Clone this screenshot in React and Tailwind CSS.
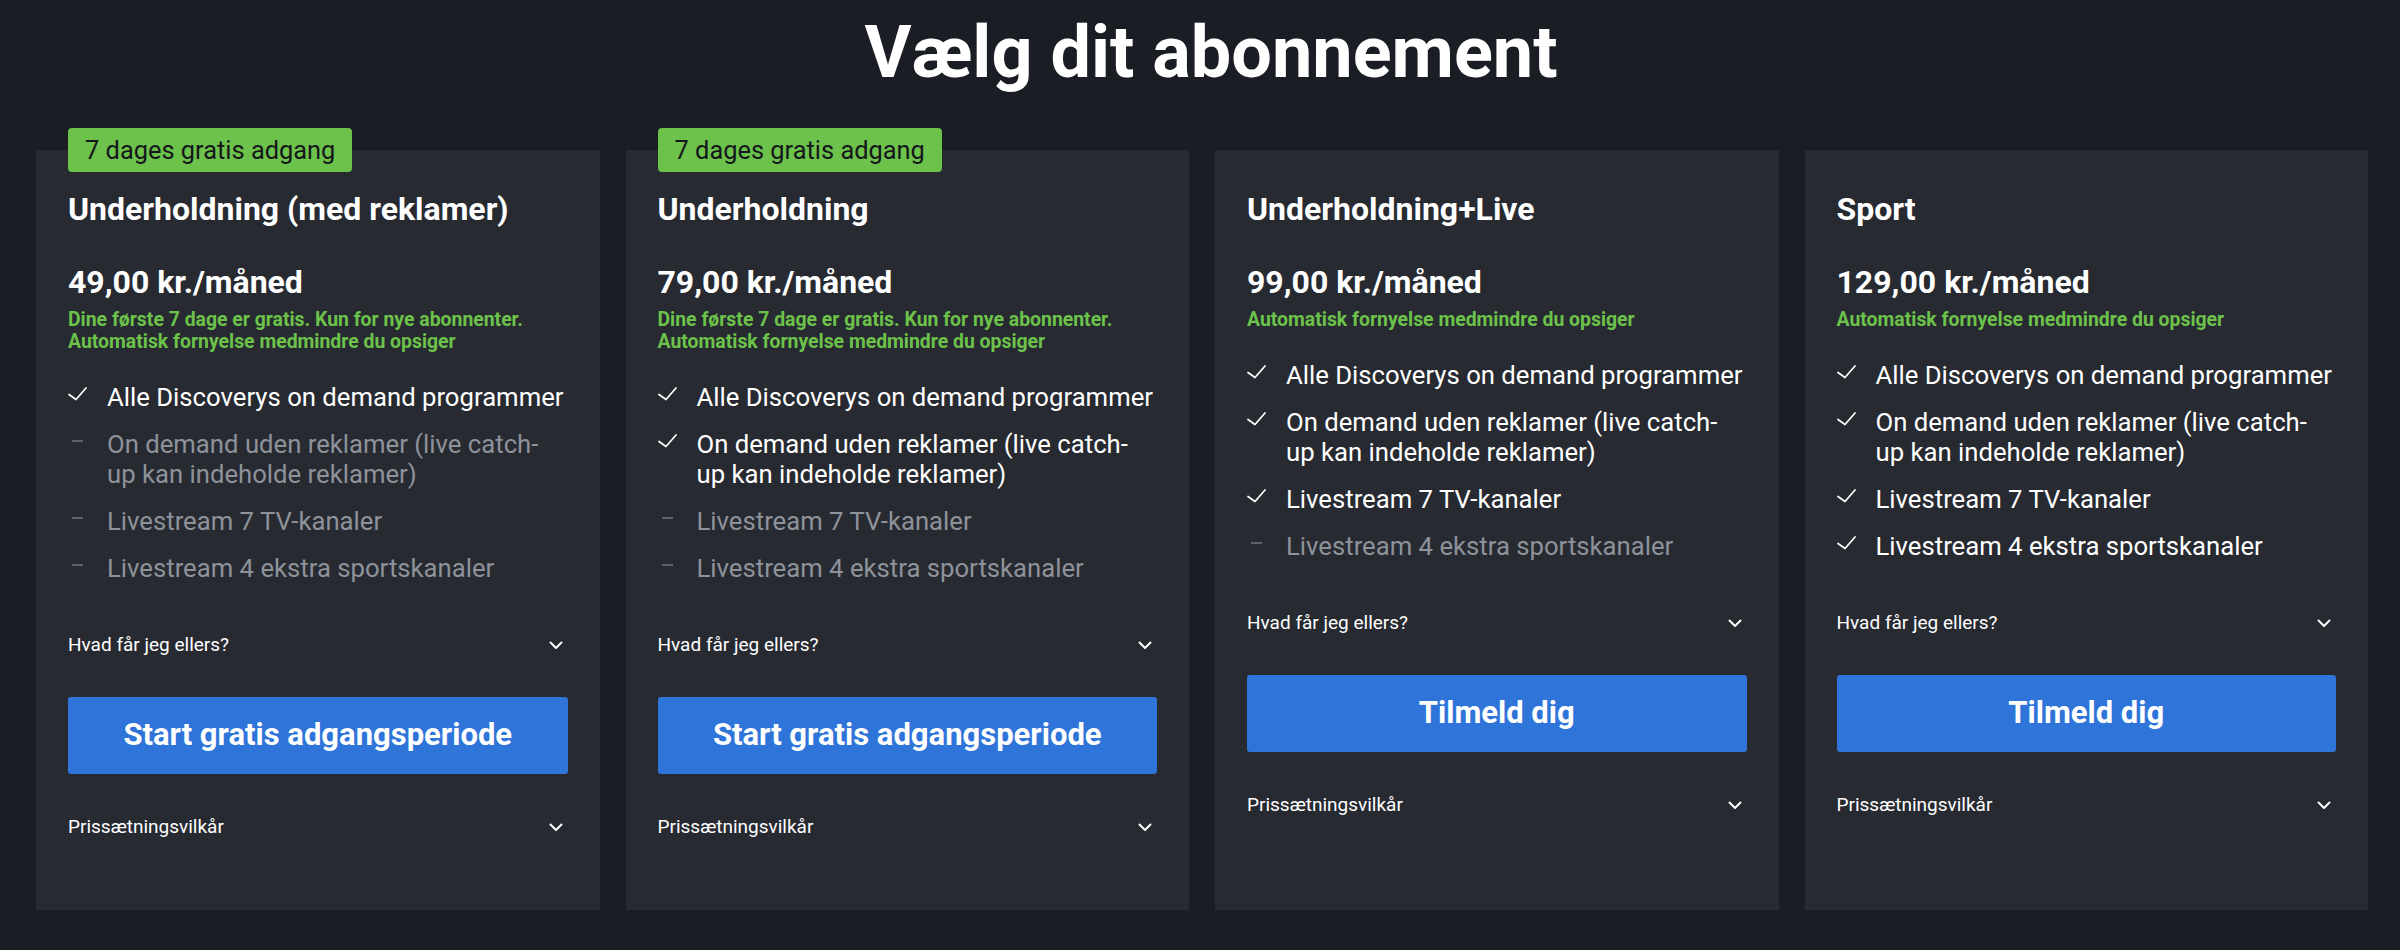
import React from 'react';

const plans = [
  {
    name: 'Underholdning (med reklamer)',
    price: '49,00 kr./måned',
    trial: true,
    note: ['Dine første 7 dage er gratis. Kun for nye abonnenter.', 'Automatisk fornyelse medmindre du opsiger'],
    features: [true, false, false, false],
    cta: 'Start gratis adgangsperiode',
  },
  {
    name: 'Underholdning',
    price: '79,00 kr./måned',
    trial: true,
    note: ['Dine første 7 dage er gratis. Kun for nye abonnenter.', 'Automatisk fornyelse medmindre du opsiger'],
    features: [true, true, false, false],
    cta: 'Start gratis adgangsperiode',
  },
  {
    name: 'Underholdning+Live',
    price: '99,00 kr./måned',
    trial: false,
    note: ['Automatisk fornyelse medmindre du opsiger'],
    features: [true, true, true, false],
    cta: 'Tilmeld dig',
  },
  {
    name: 'Sport',
    price: '129,00 kr./måned',
    trial: false,
    note: ['Automatisk fornyelse medmindre du opsiger'],
    features: [true, true, true, true],
    cta: 'Tilmeld dig',
  },
];

// lines kept as in the design (breaks after "catch-")
const featureLabels = [
  ['Alle Discoverys on demand programmer'],
  ['On demand uden reklamer (live catch-', 'up kan indeholde reklamer)'],
  ['Livestream 7 TV-kanaler'],
  ['Livestream 4 ekstra sportskanaler'],
];

const Check = () => (
  <svg width="19" height="14" viewBox="0 0 19 14" fill="none" className="mt-[5px]">
    <path d="M1 7.5L8 12.5L18 1" stroke="#ffffff" strokeWidth="1.7" strokeLinecap="round" strokeLinejoin="round" />
  </svg>
);

const Dash = () => <div className="mt-[11px] ml-[4px] h-[2px] w-[11px] bg-[#5d6169]" />;

const Chevron = () => (
  <svg width="14" height="9" viewBox="0 0 14 9" fill="none" className="mr-[5px]">
    <path d="M1.5 1.5L7 7L12.5 1.5" stroke="#ffffff" strokeWidth="2" strokeLinecap="round" strokeLinejoin="round" />
  </svg>
);

const Toggle = ({ label }) => (
  <div className="flex items-center justify-between h-[24px] text-[19px] leading-[24px] text-white">
    <span>{label}</span>
    <Chevron />
  </div>
);

const PlanCard = ({ plan }) => (
  <div className="relative flex flex-col bg-[#272a31] px-8 pt-[41px] pb-[71px]">
    {plan.trial && (
      <div className="absolute top-[-22px] left-8 h-[44px] px-[17px] flex items-center rounded-[4px] bg-[#6cc24a] text-[25.4px] text-[#15171c]">
        7 dages gratis adgang
      </div>
    )}
    <h3 className="text-[32px] leading-[36px] font-bold text-white">{plan.name}</h3>
    <div className="mt-[37px] text-[32px] leading-[36px] font-bold text-white">{plan.price}</div>
    <div className="mt-[9px] text-[19.4px] leading-[22px] font-bold text-[#6cc24a]">
      {plan.note.map((n) => (
        <div key={n}>{n}</div>
      ))}
    </div>
    <ul className="mt-[29px] flex flex-col gap-[17px]">
      {featureLabels.map((lines, i) => (
        <li key={lines[0]} className="flex">
          <div className="w-[39px] shrink-0">{plan.features[i] ? <Check /> : <Dash />}</div>
          <div
            className={`whitespace-nowrap text-[25.7px] leading-[30px] ${plan.features[i] ? 'text-white' : 'text-[#8e929a]'}`}
          >
            {lines.map((l) => (
              <div key={l}>{l}</div>
            ))}
          </div>
        </li>
      ))}
    </ul>
    <div className="mt-[50px]">
      <Toggle label="Hvad får jeg ellers?" />
    </div>
    <button className="mt-[40px] h-[77px] w-full rounded-[3px] bg-[#2f74d9] text-[31px] font-bold text-white">
      {plan.cta}
    </button>
    <div className="mt-[41px]">
      <Toggle label="Prissætningsvilkår" />
    </div>
  </div>
);

export default function App() {
  return (
    <div className="h-[950px] overflow-hidden bg-[#1a1d24] font-['Roboto',sans-serif]">
      <h1 className="pt-[17px] pl-[22px] text-center text-[72px] leading-[72px] font-bold text-white">Vælg dit abonnement</h1>
      <div className="mt-[61px] grid grid-cols-4 gap-[26px] pl-[36px] pr-[32px]">
        {plans.map((p) => (
          <PlanCard key={p.name} plan={p} />
        ))}
      </div>
    </div>
  );
}
